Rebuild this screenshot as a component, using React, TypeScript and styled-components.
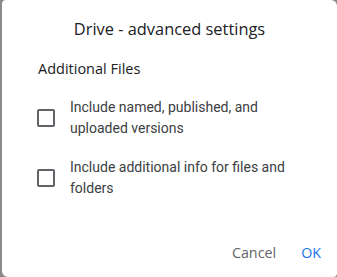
import React from "react";
import styled, { createGlobalStyle } from "styled-components";

const Global = createGlobalStyle`
  html, body { margin: 0; padding: 0; background: #8a8a8a; }
  body { font-family: Roboto, "Liberation Sans", Arial, sans-serif; }
`;

const Backdrop = styled.div`
  width: 337px;
  height: 277px;
  padding-left: 2px;
  box-sizing: border-box;
  background: #8a8a8a;
`;

const Dialog = styled.div`
  width: 335px;
  height: 277px;
  background: #ffffff;
  border-radius: 4px 6px 4px 6px;
  box-sizing: border-box;
  padding: 17px 16px 0 36px;
  display: flex;
  flex-direction: column;
`;

const Title = styled.h2`
  margin: 0 0 0 -36px;
  width: 335px;
  text-align: center;
  font-family: "Open Sans", Roboto, sans-serif;
  font-size: 16.4px;
  line-height: 24px;
  font-weight: 400;
  color: #202124;
`;

const Section = styled.h3`
  margin: 18px 0 0 0;
  font-family: "Open Sans", Roboto, sans-serif;
  font-size: 14.5px;
  line-height: 20px;
  font-weight: 500;
  color: #202124;
`;

const Options = styled.div`
  margin-top: 18px;
  display: flex;
  flex-direction: column;
  gap: 19px;
`;

const Row = styled.label`
  display: flex;
  align-items: center;
  gap: 15px;
`;

const Box = styled.span`
  flex: none;
  width: 18px;
  height: 18px;
  box-sizing: border-box;
  border: 2px solid #5f6368;
  border-radius: 2px;
  margin-left: -1px;
`;

const Label = styled.span`
  font-size: 14px;
  line-height: 20.5px;
  color: #3c4043;
  width: 230px;
`;

const Actions = styled.div`
  margin-top: auto;
  margin-bottom: 15px;
  display: flex;
  justify-content: flex-end;
  gap: 25px;
`;

const Button = styled.button<{ $primary?: boolean }>`
  border: none;
  background: none;
  padding: 0;
  height: 20px;
  font-family: "Open Sans", Roboto, sans-serif;
  font-size: 14.3px;
  font-weight: 500;
  color: ${(p) => (p.$primary ? "#1a73e8" : "#5f6368")};
  cursor: pointer;
`;

export default function App() {
  return (
    <>
      <Global />
      <Backdrop>
        <Dialog>
          <Title>Drive - advanced settings</Title>
          <Section>Additional Files</Section>
          <Options>
            <Row>
              <Box />
              <Label>Include named, published, and uploaded versions</Label>
            </Row>
            <Row>
              <Box />
              <Label>Include additional info for files and folders</Label>
            </Row>
          </Options>
          <Actions>
            <Button>Cancel</Button>
            <Button $primary>OK</Button>
          </Actions>
        </Dialog>
      </Backdrop>
    </>
  );
}
